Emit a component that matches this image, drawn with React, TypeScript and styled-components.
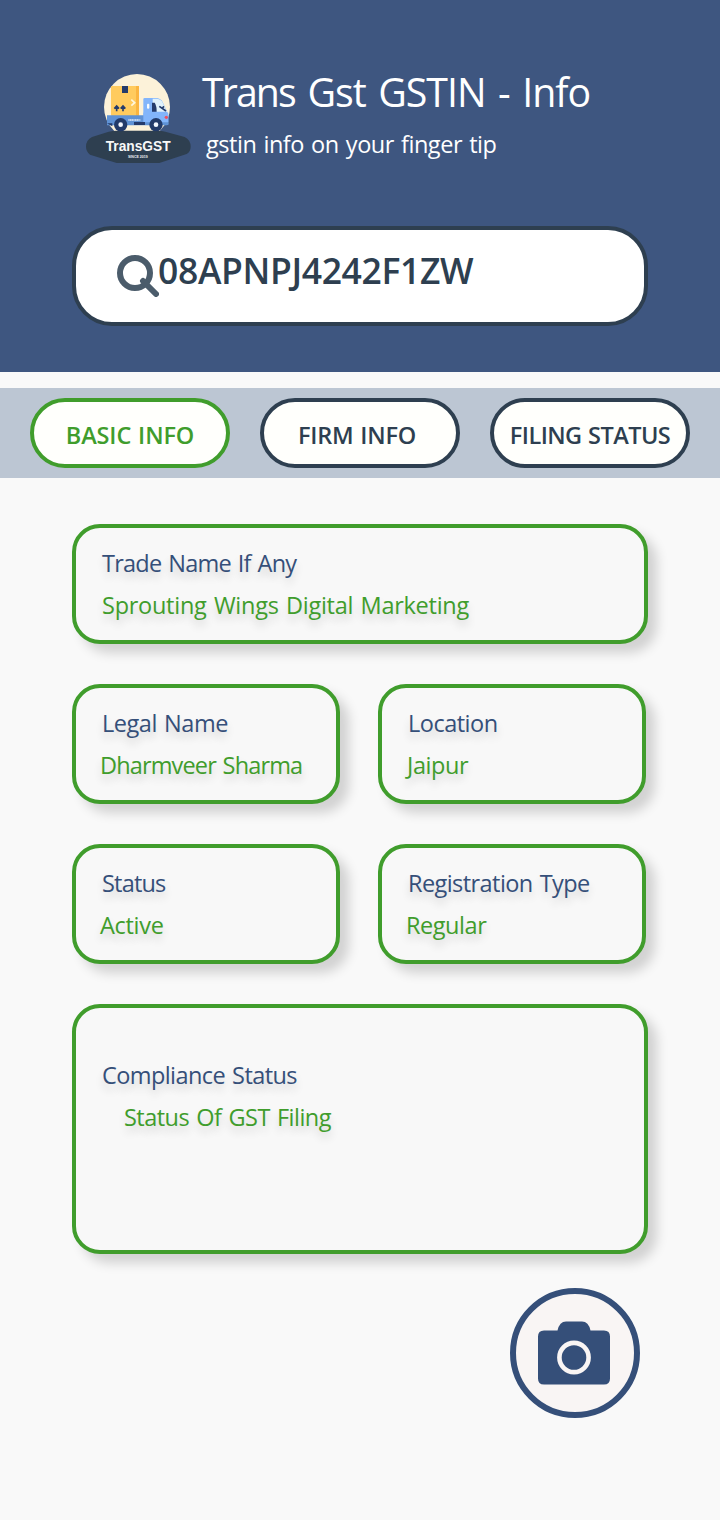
import React from "react";
import styled, { createGlobalStyle } from "styled-components";

const Global = createGlobalStyle`
  * { box-sizing: border-box; }
  body { margin: 0; background: #f9f9f9; font-family: "Open Sans", "Noto Sans", sans-serif; }
`;

const Page = styled.div`
  width: 720px;
  height: 1520px;
  background: #f9f9f9;
  overflow: hidden;
`;

const Header = styled.header`
  height: 372px;
  background: #3e5680;
  padding: 66px 72px 0 76px;
`;

const Brand = styled.div`
  display: flex;
  height: 160px;
`;

const Titles = styled.div`
  margin: -1px 0 0 2px;
`;

const Line = styled.div<{ $size: number; $height: number; $track?: number; $gap?: number; $indent?: number; $weight?: number }>`
  font-size: ${(p) => p.$size}px;
  line-height: ${(p) => p.$height}px;
  letter-spacing: ${(p) => p.$track ?? 0}px;
  word-spacing: ${(p) => p.$gap ?? 0}px;
  margin-left: ${(p) => p.$indent ?? 0}px;
  font-weight: ${(p) => p.$weight ?? 400};
  white-space: nowrap;
`;

const Title = styled(Line)`
  color: #fff;
`;

const Tight = styled.span`
  letter-spacing: -1.9px;
`;

const SearchBar = styled.div`
  display: flex;
  width: 576px;
  height: 100px;
  margin-left: -4px;
  padding: 14px 0 0 37px;
  background: #fff;
  border: 4px solid #2e3f50;
  border-radius: 40px;
  color: #2e3f50;
`;

const SearchIcon = styled.svg`
  display: block;
  flex: none;
  width: 46px;
  height: 46px;
  margin: 7px -1px 0 0;
`;

const Tabs = styled.nav`
  display: flex;
  gap: 30px;
  height: 90px;
  margin-top: 16px;
  padding: 10px 30px;
  background: #bcc6d3;
`;

const Tab = styled.button<{ $active?: boolean }>`
  display: flex;
  justify-content: center;
  width: 200px;
  height: 70px;
  padding: 16px 0 0;
  background: #fffffc;
  border: 4px solid ${(p) => (p.$active ? "#409d2c" : "#2e3f50")};
  border-radius: 35px;
  color: ${(p) => (p.$active ? "#409d2c" : "#2e3f50")};
  font-family: inherit;
`;

const Cards = styled.main`
  display: grid;
  grid-template-columns: 268px 268px;
  column-gap: 38px;
  row-gap: 40px;
  padding: 46px 72px 0;
`;

const Card = styled.section<{ $wide?: boolean; $tall?: boolean }>`
  grid-column: ${(p) => (p.$wide ? "1 / -1" : "auto")};
  width: ${(p) => (p.$wide ? 576 : 268)}px;
  height: ${(p) => (p.$tall ? 250 : 120)}px;
  padding: ${(p) => (p.$tall ? 46 : 14)}px 0 0 24px;
  background: #f8f8f8;
  border: 4px solid #409d2c;
  border-radius: 28px;
  box-shadow: 9px 9px 12px rgba(0, 0, 0, 0.16);
  text-shadow: 0 6px 8px rgba(0, 0, 0, 0.16);
`;

const Label = styled(Line)`
  color: #354f79;
`;

const Value = styled(Line)`
  color: #409d2c;
`;

const CameraButton = styled.button`
  display: flex;
  justify-content: center;
  width: 130px;
  height: 130px;
  margin: 34px 0 0 510px;
  padding: 27px 2px 0 0;
  background: #f9f5f4;
  border: 6px solid #354f79;
  border-radius: 50%;
`;

const Logo = () => (
  <svg width="124" height="104" viewBox="0 0 372 312">
    <circle cx="183" cy="123" r="99" fill="#fcf2d9" />
    <path d="M122 194H246Q258 194 268 197L326 213Q344 222 344 242Q344 256 332 264L250 291H122L42 266Q30 256 30 242Q30 222 48 213L98 197Q110 194 122 194Z" fill="#2e3f50" />
    <rect x="105" y="60" width="84" height="90" rx="3" fill="#ffcb5e" />
    <rect x="180" y="60" width="9" height="90" fill="#fbb540" />
    <path d="M138 60h18v21h-18z" fill="#243b6b" />
    <path d="M166 101l10 9-10 9" fill="none" stroke="#fff6de" strokeWidth="5" />
    <path d="M122 136v-15m-7 7l7-8 7 8M141 136v-15m-7 7l7-8 7 8" fill="none" stroke="#243b6b" strokeWidth="5" />
    <path d="M202 99q0-3 4-3h38q8 2 14 8l16 34q3 6 3 16v22h-75z" fill="#82b5fb" />
    <path d="M230 98h14q10 2 14 8l15 31h-30q-13-3-13-14z" fill="#dff1fb" />
    <path d="M228 110h8q6 9 6 27h-14z" fill="#243b6b" />
    <path d="M250 121l20 14m-12-8l6-6" stroke="#243b6b" strokeWidth="5" />
    <rect x="213" y="113" width="7" height="15" rx="3" fill="#f5fbff" />
    <path d="M93 148h112v21h72v5q0 4-5 4H93z" fill="#5f92d5" />
    <path d="M202 140h75v28h-75z" fill="#82b5fb" />
    <path d="M157 162h36" stroke="#dfeaf8" strokeWidth="4" strokeDasharray="4 1" />
    <path d="M174 168h33v9h-33zM93 172h16v9z" fill="#243b6b" />
    <circle cx="271" cy="154" r="5" fill="#f0505f" />
    <circle cx="134" cy="176" r="20" fill="#223a69" />
    <circle cx="240" cy="176" r="20" fill="#223a69" />
    <circle cx="134" cy="176" r="7" fill="#f3f7ff" />
    <circle cx="240" cy="176" r="7" fill="#f3f7ff" />
    <text x="89" y="256" textLength="195" lengthAdjust="spacingAndGlyphs" fill="#f8f8f8" fontFamily="Liberation Sans" fontWeight="700" fontSize="45">TransGST</text>
    <text x="156" y="277" textLength="59" lengthAdjust="spacingAndGlyphs" fill="#f0f2f4" fontFamily="Liberation Sans" fontWeight="700" fontSize="11">SINCE 2019</text>
  </svg>
);

const Camera = () => (
  <svg width="72" height="64" viewBox="0 0 72 64">
    <path d="M6 9.500H19.500Q21.500 0.500 28 0.500H44Q50.500 0.500 52.500 9.500H66Q72 9.500 72 15.500V57.500Q72 63.500 66 63.500H6Q0 63.500 0 57.500V15.500Q0 9.500 6 9.500Z" fill="#354f79" />
    <circle cx="36" cy="36.500" r="14.600" fill="none" stroke="#f9f5f4" strokeWidth="4.600" />
  </svg>
);

const tabs = [
  { text: "BASIC INFO", track: -0.13, indent: 0 },
  { text: "FIRM INFO", track: -0.25, indent: -6 },
  { text: "FILING STATUS", track: -0.56, indent: 0 },
];

const cards = [
  { label: "Trade Name If Any", labelTrack: -0.76, value: "Sprouting Wings Digital Marketing", valueTrack: -0.26, indent: 2, wide: true },
  { label: "Legal Name", labelTrack: -0.45, value: "Dharmveer Sharma", valueTrack: -0.86 },
  { label: "Location", labelTrack: -0.5, value: "Jaipur", valueTrack: -0.4, indent: 1 },
  { label: "Status", labelTrack: -0.8, value: "Active", valueTrack: -0.3 },
  { label: "Registration Type", labelTrack: -0.57, value: "Regular", valueTrack: -0.45 },
  { label: "Compliance Status", labelTrack: -0.58, value: "Status Of GST Filing", valueTrack: -0.52, indent: 24, wide: true, tall: true },
];

export default function App() {
  return (
    <>
      <Global />
      <Page>
        <Header>
          <Brand>
            <Logo />
            <Titles>
              <Title $size={39.3} $height={54} $track={-1} $gap={3.3}><Tight>Trans</Tight> Gst GSTIN - Info</Title>
              <Title $size={23.5} $height={50} $track={-0.47} $gap={1.5} $indent={4}>gstin info on your finger tip</Title>
            </Titles>
          </Brand>
          <SearchBar>
            <SearchIcon viewBox="0 0 46 46" fill="none" stroke="#4b5c6b">
              <circle cx="22" cy="22" r="15" strokeWidth="6" />
              <path d="M30 30L43 43" strokeWidth="6" strokeLinecap="round" />
            </SearchIcon>
            <Line $size={35.5} $height={52} $weight={600} $track={-0.35}>08APNPJ4242F1ZW</Line>
          </SearchBar>
        </Header>
        <Tabs>
          {tabs.map((t, i) => (
            <Tab key={t.text} $active={i === 0}>
              <Line $size={23.5} $height={34} $weight={600} $track={t.track} $gap={1} $indent={t.indent}>{t.text}</Line>
            </Tab>
          ))}
        </Tabs>
        <Cards>
          {cards.map((c) => (
            <Card key={c.label} $wide={c.wide} $tall={c.tall}>
              <Label $size={23.5} $height={42} $track={c.labelTrack} $gap={1.5} $indent={2}>{c.label}</Label>
              <Value $size={23.5} $height={42} $track={c.valueTrack} $gap={1.5} $indent={c.indent}>{c.value}</Value>
            </Card>
          ))}
        </Cards>
        <CameraButton aria-label="Scan"><Camera /></CameraButton>
      </Page>
    </>
  );
}
